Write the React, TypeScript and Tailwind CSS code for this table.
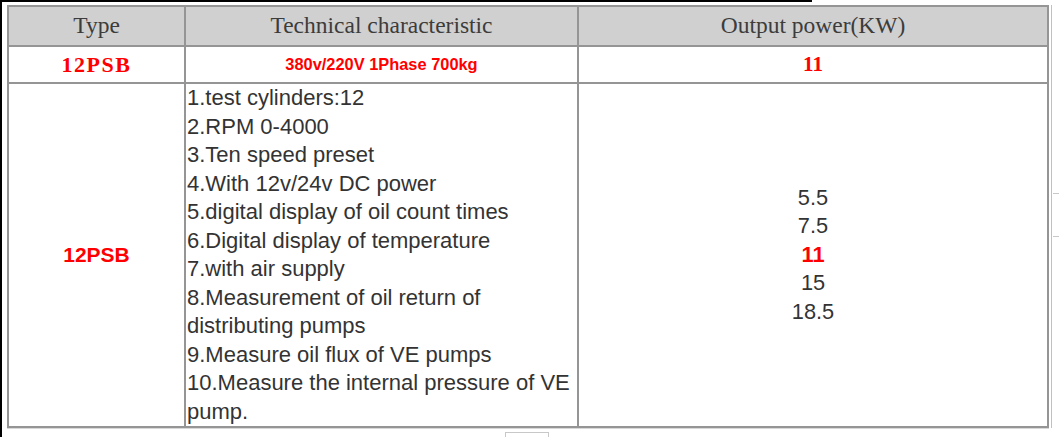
import React from "react";

const sans = { fontFamily: '"Liberation Sans", Arial, sans-serif' };
const serif = { fontFamily: '"Liberation Serif", "Times New Roman", serif' };

const features = [
  "1.test cylinders:12",
  "2.RPM 0-4000",
  "3.Ten speed preset",
  "4.With 12v/24v DC power",
  "5.digital display of oil count times",
  "6.Digital display of temperature",
  "7.with air supply",
  "8.Measurement of oil return of distributing pumps",
  "9.Measure oil flux of VE pumps",
  "10.Measure the internal pressure of VE pump.",
];

export default function App() {
  return (
    <div className="relative w-[1059px] h-[437px] bg-white overflow-hidden flex">
      <div className="w-[2px] h-full bg-black shrink-0" />
      <div className="absolute left-0 top-0 w-[812px] h-[2px] bg-black" />
      <div className="ml-[5px] mt-[5px] flex flex-col">
        <div className="grid grid-cols-[175px_391px_468px] grid-rows-[38px_35px_342px] gap-[2px] p-[2px] bg-[#959595] w-[1042px]">
          <div className="bg-[#d0d0d0] flex items-center justify-center text-[23.5px] text-[#3c3c3c]" style={serif}>
            Type
          </div>
          <div className="bg-[#d0d0d0] flex items-center justify-center text-[23.5px] text-[#3c3c3c]" style={serif}>
            Technical characteristic
          </div>
          <div className="bg-[#d0d0d0] flex items-center justify-center text-[23.5px] text-[#3c3c3c]" style={serif}>
            Output power(KW)
          </div>

          <div className="bg-white flex items-center justify-center text-[22px] font-bold text-[#f00] tracking-[1.5px]" style={serif}>
            12PSB
          </div>
          <div className="bg-white flex items-center justify-center text-[16.4px] font-bold text-[#f00]" style={sans}>
            380v/220V 1Phase 700kg
          </div>
          <div className="bg-white flex items-center justify-center text-[21px] font-bold text-[#f00]" style={serif}>
            11
          </div>

          <div className="bg-white flex items-center justify-center text-[21px] font-bold text-[#f00]" style={sans}>
            12PSB
          </div>
          <div className="bg-white text-[22px] leading-[28.5px] text-[#333] pl-[1px]" style={sans}>
            {features.map((f) => (
              <div key={f}>{f}</div>
            ))}
          </div>
          <div className="bg-white flex flex-col items-center justify-center text-[21.8px] leading-[28.5px] text-[#333]" style={sans}>
            <div>5.5</div>
            <div>7.5</div>
            <div className="font-bold text-[#f00]">11</div>
            <div>15</div>
            <div>18.5</div>
          </div>
        </div>
        <div className="h-[1px] w-[1042px] bg-[#d8d8d8]" />
        <div className="ml-[498px] mt-[3px] w-[44px] h-[6px] border border-b-0 border-[#c8c8c8]" />
      </div>
      <div className="ml-[2px] mt-[5px] flex flex-col">
        <div className="w-[1px] h-[423px] bg-[#c0c0c0]" />
      </div>
      <div className="absolute left-[1053px] top-[193px] w-[6px] h-[1px] bg-[#c8c8c8]" />
      <div className="absolute left-[1053px] top-[236px] w-[6px] h-[1px] bg-[#c8c8c8]" />
    </div>
  );
}
